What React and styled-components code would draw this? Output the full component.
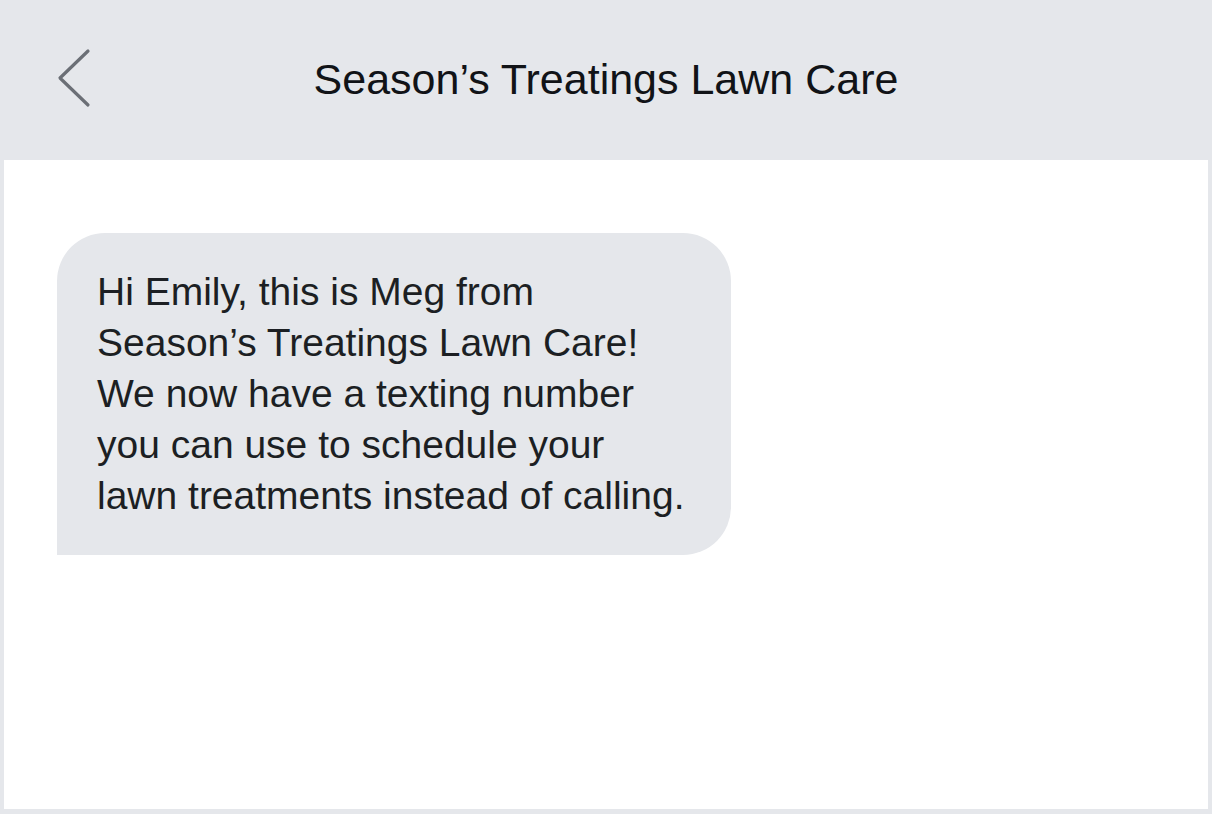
import React from "react";
import styled, { createGlobalStyle } from "styled-components";

const Global = createGlobalStyle`
  html, body { margin: 0; padding: 0; }
  body {
    background: #e5e7eb;
    font-family: "Liberation Sans", Arial, sans-serif;
    -webkit-font-smoothing: antialiased;
  }
`;

const Page = styled.div`
  width: 1212px;
  height: 814px;
  background: #e5e7eb;
  display: flex;
  flex-direction: column;
  padding: 0 4px 5px;
  box-sizing: border-box;
`;

const Header = styled.header`
  height: 160px;
  flex: none;
  display: grid;
  grid-template-columns: 120px 1fr 120px;
  align-items: center;
  margin: 0 -4px;
`;

const BackButton = styled.button`
  border: none;
  background: none;
  padding: 0 0 0 57px;
  margin-top: -4px;
  display: flex;
  align-items: center;
  cursor: pointer;
`;

const Title = styled.h1`
  margin: -2px 0 0;
  text-align: center;
  font-size: 43px;
  font-weight: 400;
  color: #111317;
  white-space: nowrap;
`;

const Body = styled.main`
  flex: 1;
  background: #ffffff;
  padding: 73px 0 0 53px;
`;

const Bubble = styled.div`
  display: inline-block;
  background: #e5e7eb;
  border-radius: 48px 48px 48px 0;
  padding: 33px 40px 34px 40px;
  width: 594px;
  color: #1c1f23;
  font-size: 39px;
  line-height: 51px;
  white-space: nowrap;
`;

export default function App() {
  return (
    <>
      <Global />
      <Page>
        <Header>
          <BackButton aria-label="Back">
            <svg width="34" height="60" viewBox="0 0 34 60" fill="none">
              <path d="M31 3 L3 30 L31 57" stroke="#6b6f76" strokeWidth="3.2" strokeLinecap="round" strokeLinejoin="round" />
            </svg>
          </BackButton>
          <Title>Season’s Treatings Lawn Care</Title>
          <div />
        </Header>
        <Body>
          <Bubble>
            Hi Emily, this is Meg from<br />
            Season’s Treatings Lawn Care!<br />
            We now have a texting number<br />
            you can use to schedule your<br />
            lawn treatments instead of calling.
          </Bubble>
        </Body>
      </Page>
    </>
  );
}
